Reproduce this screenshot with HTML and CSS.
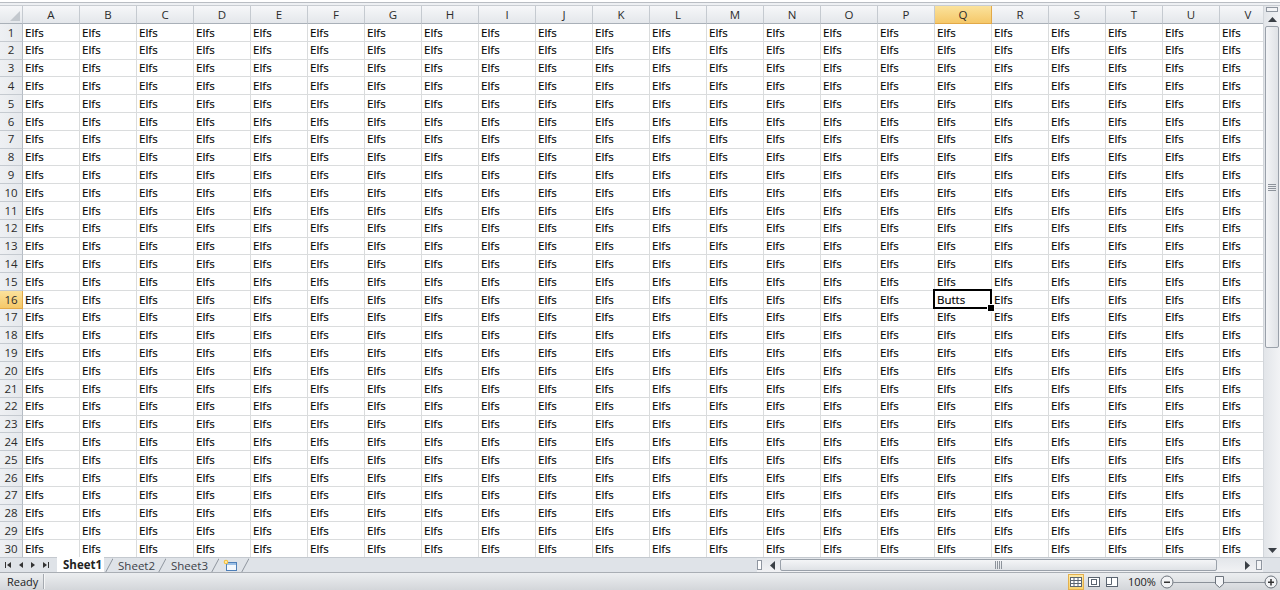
FILE: index.html
```html
<!DOCTYPE html>
<html>
<head>
<meta charset="utf-8">
<link rel="stylesheet" href="styles.css">
</head>
<body>
<div class="app">
  <div class="formula-edge"></div>
  <div class="main">
    <div class="sheet">
      <div class="grid" id="grid"></div>
    </div>
    <div class="vscroll">
      <div class="vsplit"></div>
      <div class="vbtn"><svg width="9" height="5" viewBox="0 0 9 5"><path d="M0 5 L4.5 0 L9 5 Z" fill="#3a3f45"/></svg></div>
      <div class="vtrack">
        <div class="vthumb"><span class="grip-h"></span></div>
        <div class="vrest"></div>
      </div>
      <div class="vbtn"><svg width="9" height="5" viewBox="0 0 9 5"><path d="M0 0 L4.5 5 L9 0 Z" fill="#3a3f45"/></svg></div>
    </div>
  </div>
  <div class="tabbar">
    <div class="navs">
      <svg width="52" height="14" viewBox="0 0 52 14">
        <rect x="5" y="4" width="1" height="6" fill="#333"/>
        <path d="M11 4 L7 7 L11 10 Z" fill="#333"/>
        <path d="M23 4 L19 7 L23 10 Z" fill="#333"/>
        <path d="M31 4 L35 7 L31 10 Z" fill="#333"/>
        <path d="M43 4 L47 7 L43 10 Z" fill="#333"/>
        <rect x="48" y="4" width="1" height="6" fill="#333"/>
      </svg>
    </div>
    <div class="tabs">
      <div class="tab active">Sheet1</div>
      <svg class="slant" width="9" height="15" viewBox="0 0 9 15"><path d="M0 14.5 L1.5 14.5 L9 0.5" fill="none" stroke="#8e959e" stroke-width="1"/></svg>
      <div class="tab">Sheet2</div>
      <svg class="slant" width="9" height="15" viewBox="0 0 9 15"><path d="M0 14.5 L1.5 14.5 L9 0.5" fill="none" stroke="#8e959e" stroke-width="1"/></svg>
      <div class="tab">Sheet3</div>
      <svg class="slant" width="9" height="15" viewBox="0 0 9 15"><path d="M0 14.5 L1.5 14.5 L9 0.5" fill="none" stroke="#8e959e" stroke-width="1"/></svg>
      <div class="tab newtab">
        <svg width="16" height="13" viewBox="0 0 16 13">
          <rect x="4.5" y="3.5" width="10" height="8" fill="#f4f8fc" stroke="#4d7fb8"/>
          <rect x="5" y="4" width="9" height="2" fill="#9cc0e6"/>
          <circle cx="4" cy="3" r="2.3" fill="#f6c343"/>
          <circle cx="4" cy="3" r="1" fill="#fff3c4"/>
        </svg>
      </div>
      <svg class="slant" width="9" height="15" viewBox="0 0 9 15"><path d="M0 14.5 L1.5 14.5 L9 0.5" fill="none" stroke="#8e959e" stroke-width="1"/></svg>
    </div>
    <div class="tabfill"></div>
    <div class="hscroll">
      <div class="hsplit"></div>
      <div class="hbtn"><svg width="5" height="9" viewBox="0 0 5 9"><path d="M5 0 L0 4.5 L5 9 Z" fill="#3a3f45"/></svg></div>
      <div class="htrack">
        <div class="hthumb"><span class="grip-v"></span></div>
        <div class="hrest"></div>
      </div>
      <div class="hbtn"><svg width="5" height="9" viewBox="0 0 5 9"><path d="M0 0 L5 4.5 L0 9 Z" fill="#3a3f45"/></svg></div>
      <div class="hsplit2"></div>
    </div>
    <div class="corner"></div>
  </div>
  <div class="status">
    <div class="ready">Ready</div>
    <div class="sep"></div>
    <div class="spacer"></div>
    <div class="views">
      <div class="view on">
        <svg width="14" height="12" viewBox="0 0 14 12">
          <rect x="1.5" y="1.5" width="11" height="9" fill="#fff" stroke="#5a6470"/>
          <path d="M1.5 4.5 H12.5 M1.5 7.5 H12.5 M5 1.5 V10.5 M9 1.5 V10.5" stroke="#5a6470" stroke-width="1"/>
        </svg>
      </div>
      <div class="view">
        <svg width="14" height="12" viewBox="0 0 14 12">
          <rect x="1.5" y="1.5" width="11" height="9" fill="#fff" stroke="#5a6470"/>
          <rect x="4.5" y="3.5" width="5" height="5" fill="none" stroke="#5a6470"/>
        </svg>
      </div>
      <div class="view">
        <svg width="14" height="12" viewBox="0 0 14 12">
          <rect x="1.5" y="1.5" width="11" height="9" fill="#fff" stroke="#5a6470"/>
          <path d="M6.5 1.5 V8.5 H1.5" fill="none" stroke="#5a6470"/>
        </svg>
      </div>
    </div>
    <div class="zoomtxt">100%</div>
    <div class="slider">
      <svg width="118" height="16" viewBox="0 0 118 16">
        <circle cx="7" cy="8" r="6" fill="#f2f3f5" stroke="#6c737c"/>
        <rect x="4" y="7.5" width="6" height="1.5" fill="#333"/>
        <line x1="13" y1="8.5" x2="105" y2="8.5" stroke="#8b9199" stroke-width="1"/>
        <path d="M55.5 2.5 H63.5 V10 L59.5 13.5 L55.5 10 Z" fill="#f4f5f7" stroke="#6c737c"/>
        <circle cx="111" cy="8" r="6" fill="#f2f3f5" stroke="#6c737c"/>
        <rect x="108" y="7.5" width="6" height="1.5" fill="#333"/>
        <rect x="110.25" y="5" width="1.5" height="6.5" fill="#333"/>
      </svg>
    </div>
  </div>
</div>
<script src="script.js"></script>
</body>
</html>
```
FILE: styles.css
```css
* { box-sizing: border-box; margin: 0; padding: 0; }
html, body { width: 1280px; height: 590px; overflow: hidden; background: #fff; }
body { font-family: "Open Sans", "Noto Sans", sans-serif; color: #000; }

.app { display: flex; flex-direction: column; height: 590px; width: 1280px; }

.formula-edge {
  height: 6px;
  background: linear-gradient(#ffffff 0, #ffffff 2px, #b9bdc3 2px, #b9bdc3 3px, #eef0f3 3px);
  border-bottom: 1px solid #c9cdd2;
  flex: none;
}

.main { display: flex; height: 551px; flex: none; }
.sheet { width: 1263px; overflow: hidden; position: relative; }

.grid {
  display: grid;
  grid-template-columns: 23px repeat(22, 57px);
  grid-template-rows: 18px repeat(30, 17.8px);
  width: 1277px;
}

.c {
  border-right: 1px solid #dadcdd;
  border-bottom: 1px solid #dadcdd;
  font-size: 11.5px;
  line-height: 1;
  padding-left: 2px;
  display: flex;
  align-items: center;
  white-space: nowrap;
  overflow: hidden;
  color: #000;
  -webkit-text-stroke: 0.15px #000;
}

.h, .rh {
  background: linear-gradient(#f6f7f9, #e4e7eb);
  border-right: 1px solid #c5cad0;
  border-bottom: 1px solid #c5cad0;
  color: #2b2b2b;
  justify-content: center;
  padding-left: 0;
  font-size: 11.5px;
  -webkit-text-stroke: 0;
}
.rh { background: linear-gradient(to right, #eef0f3, #e6e9ed); border-right-color: #b5bcc4; }
.h { border-bottom-color: #a9b0b8; }

.h.sel, .rh.sel {
  background: linear-gradient(#fbe29c, #f5c869);
  border-right-color: #e2a948;
  border-bottom-color: #e2a948;
}

.corner-cell { position: relative; }
.corner-cell::after {
  content: "";
  position: absolute;
  right: 2px;
  bottom: 2px;
  width: 0;
  height: 0;
  border-left: 10px solid transparent;
  border-bottom: 10px solid #c3c8ce;
}

.c.active { position: relative; overflow: visible; }
.c.active::before {
  content: "";
  position: absolute;
  left: -2px;
  top: -2px;
  right: -1px;
  bottom: -1px;
  border: 2px solid #000;
  z-index: 2;
}
.c.active::after {
  content: "";
  position: absolute;
  right: -4px;
  bottom: -4px;
  width: 6px;
  height: 6px;
  background: #000;
  border: 1px solid #fff;
  z-index: 3;
}

/* vertical scrollbar */
.vscroll {
  width: 17px;
  display: flex;
  flex-direction: column;
  background: linear-gradient(to right, #e2e5e9, #f2f3f5);
  border-left: 1px solid #d2d6db;
}
.vsplit {
  height: 5px;
  margin: 1px 2px 0;
  border: 1px solid #8f96a0;
  background: #f3f4f6;
}
.vbtn {
  height: 14px;
  display: flex;
  align-items: center;
  justify-content: center;
}
.vtrack { flex: 1; display: flex; flex-direction: column; }
.vthumb {
  height: 322px;
  margin: 0 1px 0;
  border: 1px solid #9aa1aa;
  border-radius: 2px;
  background: linear-gradient(to right, #f4f5f7, #dfe2e6);
  display: flex;
  align-items: center;
  justify-content: center;
}
.grip-h {
  width: 8px;
  height: 7px;
  background: repeating-linear-gradient(#8d939b 0, #8d939b 1px, transparent 1px, transparent 2px);
}
.grip-v {
  width: 7px;
  height: 8px;
  background: repeating-linear-gradient(to right, #8d939b 0, #8d939b 1px, transparent 1px, transparent 2px);
}
.vrest { flex: 1; }

/* tab bar */
.tabbar {
  height: 15px;
  flex: none;
  display: flex;
  background: #dfe3e8;
  border-top: 1px solid #c4c9cf;
  font-size: 11px;
}
.navs { width: 57px; display: flex; align-items: center; }
.tabs { display: flex; align-items: stretch; }
.tab {
  padding: 0 2px 0 5px;
  display: flex;
  align-items: center;
  color: #3c4148;
  font-size: 11.5px;
  height: 14px;
}
.tab.active { background: #fff; font-weight: bold; color: #222; margin-top: -1px; height: 15px; padding-left: 6px; }
.slant { display: block; }
.newtab { padding: 0 2px 0 3px; }
.tabfill { flex: 1; }

.hscroll {
  width: 506px;
  display: flex;
  align-items: stretch;
  background: linear-gradient(#e3e6ea, #f1f2f4);
}
.hsplit {
  width: 5px;
  margin: 2px 2px 2px 0;
  border: 1px solid #8f96a0;
  background: #fff;
}
.hbtn { width: 16px; display: flex; align-items: center; justify-content: center; }
.htrack { flex: 1; display: flex; }
.hthumb {
  width: 437px;
  margin: 1px 0;
  border: 1px solid #9aa1aa;
  border-radius: 2px;
  background: linear-gradient(#f4f5f7, #dfe2e6);
  display: flex;
  align-items: center;
  justify-content: center;
}
.hrest { flex: 1; }
.hsplit2 {
  width: 6px;
  margin: 2px 1px;
  border: 1px solid #8f96a0;
  background: #f3f4f6;
}
.corner { width: 17px; background: #dfe3e8; }

/* status bar */
.status {
  height: 18px;
  flex: none;
  display: flex;
  align-items: center;
  background: linear-gradient(#eceef0, #d3d6da);
  border-top: 1px solid #a9aeb4;
  font-size: 11px;
  color: #222;
}
.ready { padding-left: 7px; width: 43px; }
.sep { width: 1px; height: 15px; background: #a5aab0; box-shadow: 1px 0 0 #f4f5f6; }
.spacer { flex: 1; }
.views { display: flex; align-items: center; gap: 2px; margin-right: 6px; }
.view { width: 16px; height: 16px; display: flex; align-items: center; justify-content: center; border: 1px solid transparent; }
.view.on { background: linear-gradient(#fdeaa8, #f8d36f); border-color: #e4b04d; }
.zoomtxt { width: 34px; padding-left: 2px; }
.slider { width: 120px; display: flex; align-items: center; }
```
FILE: script.js
```js
(function () {
  var cols = "ABCDEFGHIJKLMNOPQRSTUV".split("");
  var grid = document.getElementById("grid");
  var selCol = 16, selRow = 16;
  var html = '<div class="c h corner-cell"></div>';
  cols.forEach(function (c, i) {
    html += '<div class="c h' + (i === selCol ? ' sel' : '') + '">' + c + '</div>';
  });
  for (var r = 1; r <= 30; r++) {
    html += '<div class="c rh' + (r === selRow ? ' sel' : '') + '">' + r + '</div>';
    for (var i = 0; i < cols.length; i++) {
      if (r === selRow && i === selCol) {
        html += '<div class="c active">Butts</div>';
      } else {
        html += '<div class="c">Elfs</div>';
      }
    }
  }
  grid.innerHTML = html;
})();
```
